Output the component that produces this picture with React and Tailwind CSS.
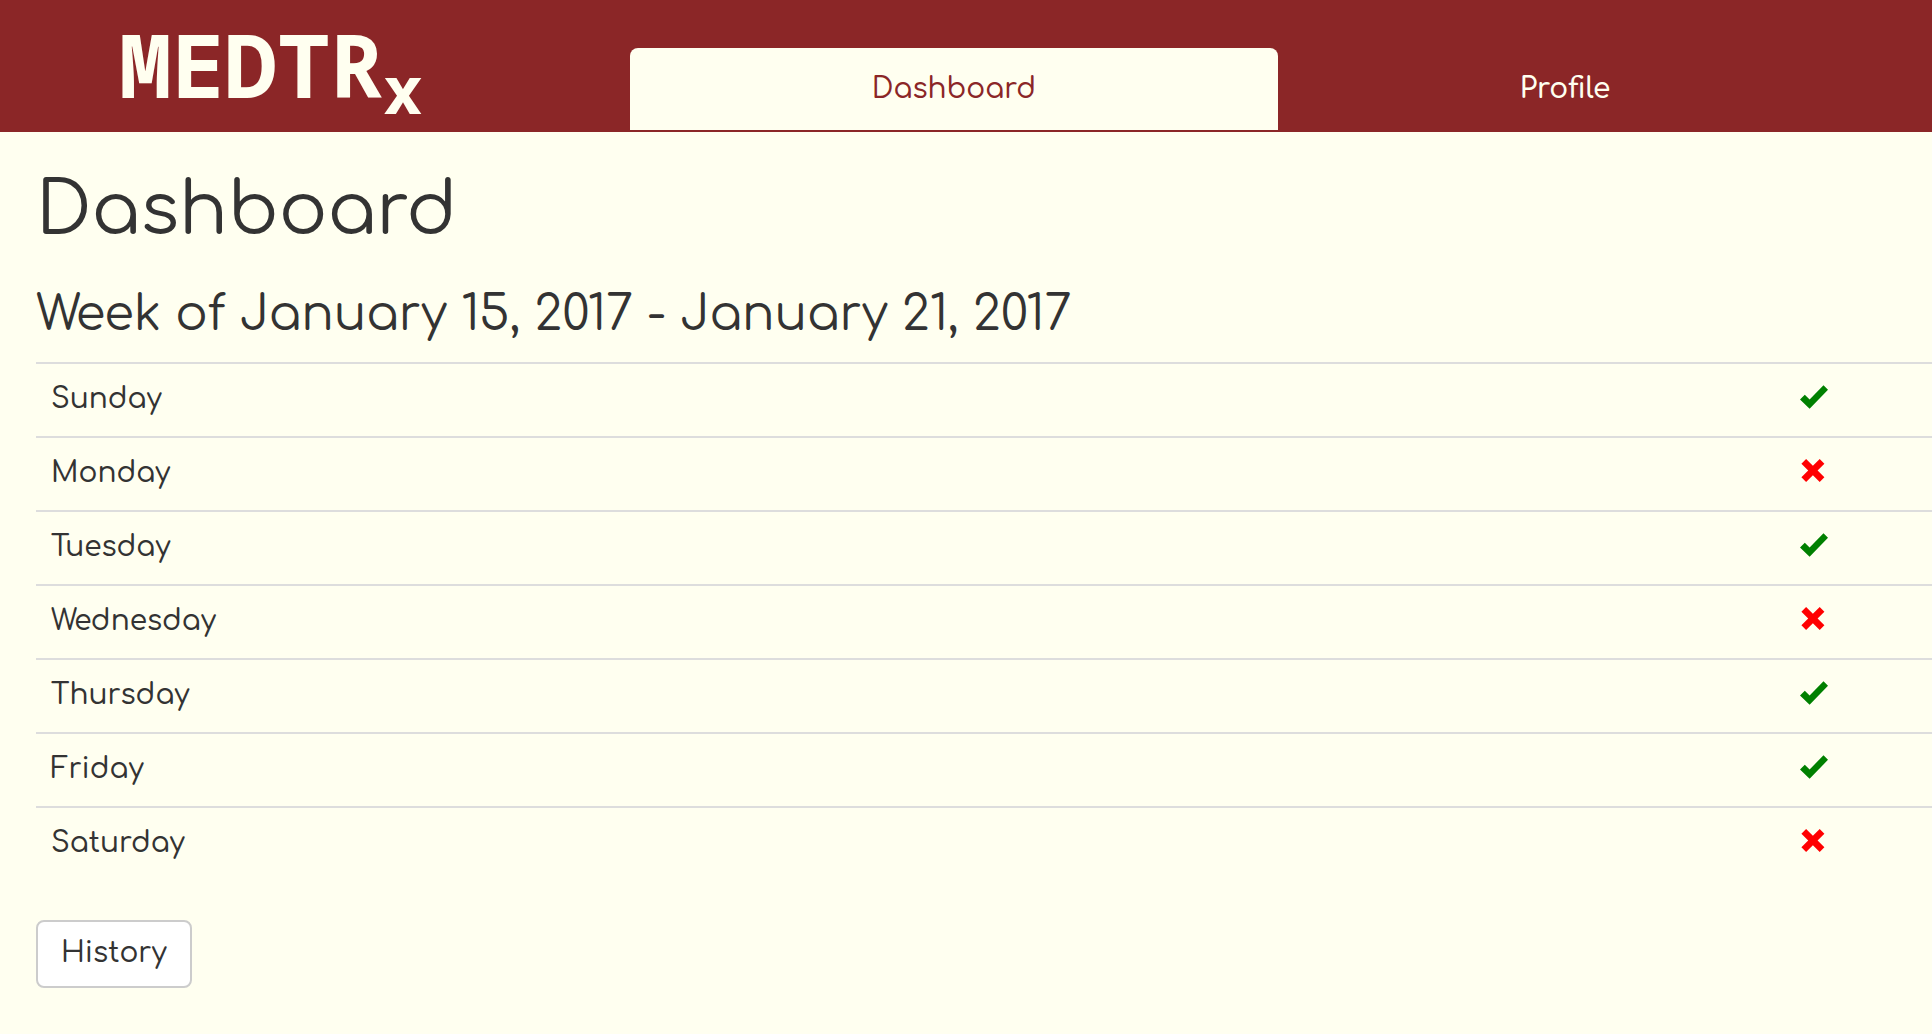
const days = [
  { name: "Sunday", taken: true },
  { name: "Monday", taken: false },
  { name: "Tuesday", taken: true },
  { name: "Wednesday", taken: false },
  { name: "Thursday", taken: true },
  { name: "Friday", taken: true },
  { name: "Saturday", taken: false },
];

function Check() {
  return (
    <svg role="img" aria-label="Taken" viewBox="0 0 28 24" className="h-6 w-7 fill-[#008000]">
      <path d="M0 14.5 4.8 9.7 9.6 14.5 23.5 0.3 28 4.8 9.6 23.8Z" />
    </svg>
  );
}

function Cross() {
  return (
    <svg role="img" aria-label="Missed" viewBox="0 0 28 24" className="h-6 w-7 fill-[#ff0000]">
      <path d="M1.4 4.7 6.1 0 12.9 6.8 19.7 0 24.4 4.7 17.6 11.5 24.4 18.3 19.7 23 12.9 16.2 6.1 23 1.4 18.3 8.2 11.5Z" />
    </svg>
  );
}

function Header() {
  return (
    <header className="flex items-end bg-[#8b2627] pb-0.5 text-[#fffff0]">
      <div className="w-[32.6%] shrink-0 pb-0.5 pl-[119px]">
        <a href="#home" className='block font-["Noto_Sans_Mono","DejaVu_Sans_Mono",monospace] text-[88px] leading-[128px] font-bold'>
          MEDTR<sub className="bottom-[-16px] text-[66px]">x</sub>
        </a>
      </div>
      <nav className="grid flex-1 grid-cols-[648fr_574fr_80fr] text-center leading-10">
        <a href="#dashboard" aria-current="page" className="rounded-t-lg bg-[#fffff0] px-8 py-[21px] font-medium text-[#8b2627]">
          Dashboard
        </a>
        <a href="#profile" className="px-8 py-[21px] font-semibold">
          Profile
        </a>
      </nav>
    </header>
  );
}

export default function App() {
  return (
    <div className='min-h-screen bg-[#fffff0] font-["Comfortaa","Inter",sans-serif] text-[28px] font-medium text-[#333333]'>
      <Header />
      <main className="pl-9">
        <h1 className="pt-[39px] text-[72px] leading-20 font-normal">Dashboard</h1>
        <h2 className="pt-[35px] pb-[18px] text-5xl leading-[58px] font-normal">Week of January 15, 2017 - January 21, 2017</h2>
        <table className="w-full border-collapse">
          <tbody>
            {days.map((day) => (
              <tr key={day.name} className="border-t-2 border-[#dddddd]">
                <th scope="row" className="px-[15px] pt-[15px] pb-[17px] text-left leading-10 font-medium">
                  {day.name}
                </th>
                <td className="w-[132px] py-4">
                  <div className="flex pb-1.5">{day.taken ? <Check /> : <Cross />}</div>
                </td>
              </tr>
            ))}
          </tbody>
        </table>
        <button type="button" className="mt-10 rounded-lg border-2 border-[#cccccc] bg-white px-[23px] pt-[11px] pb-[13px] leading-10">
          History
        </button>
      </main>
    </div>
  );
}
